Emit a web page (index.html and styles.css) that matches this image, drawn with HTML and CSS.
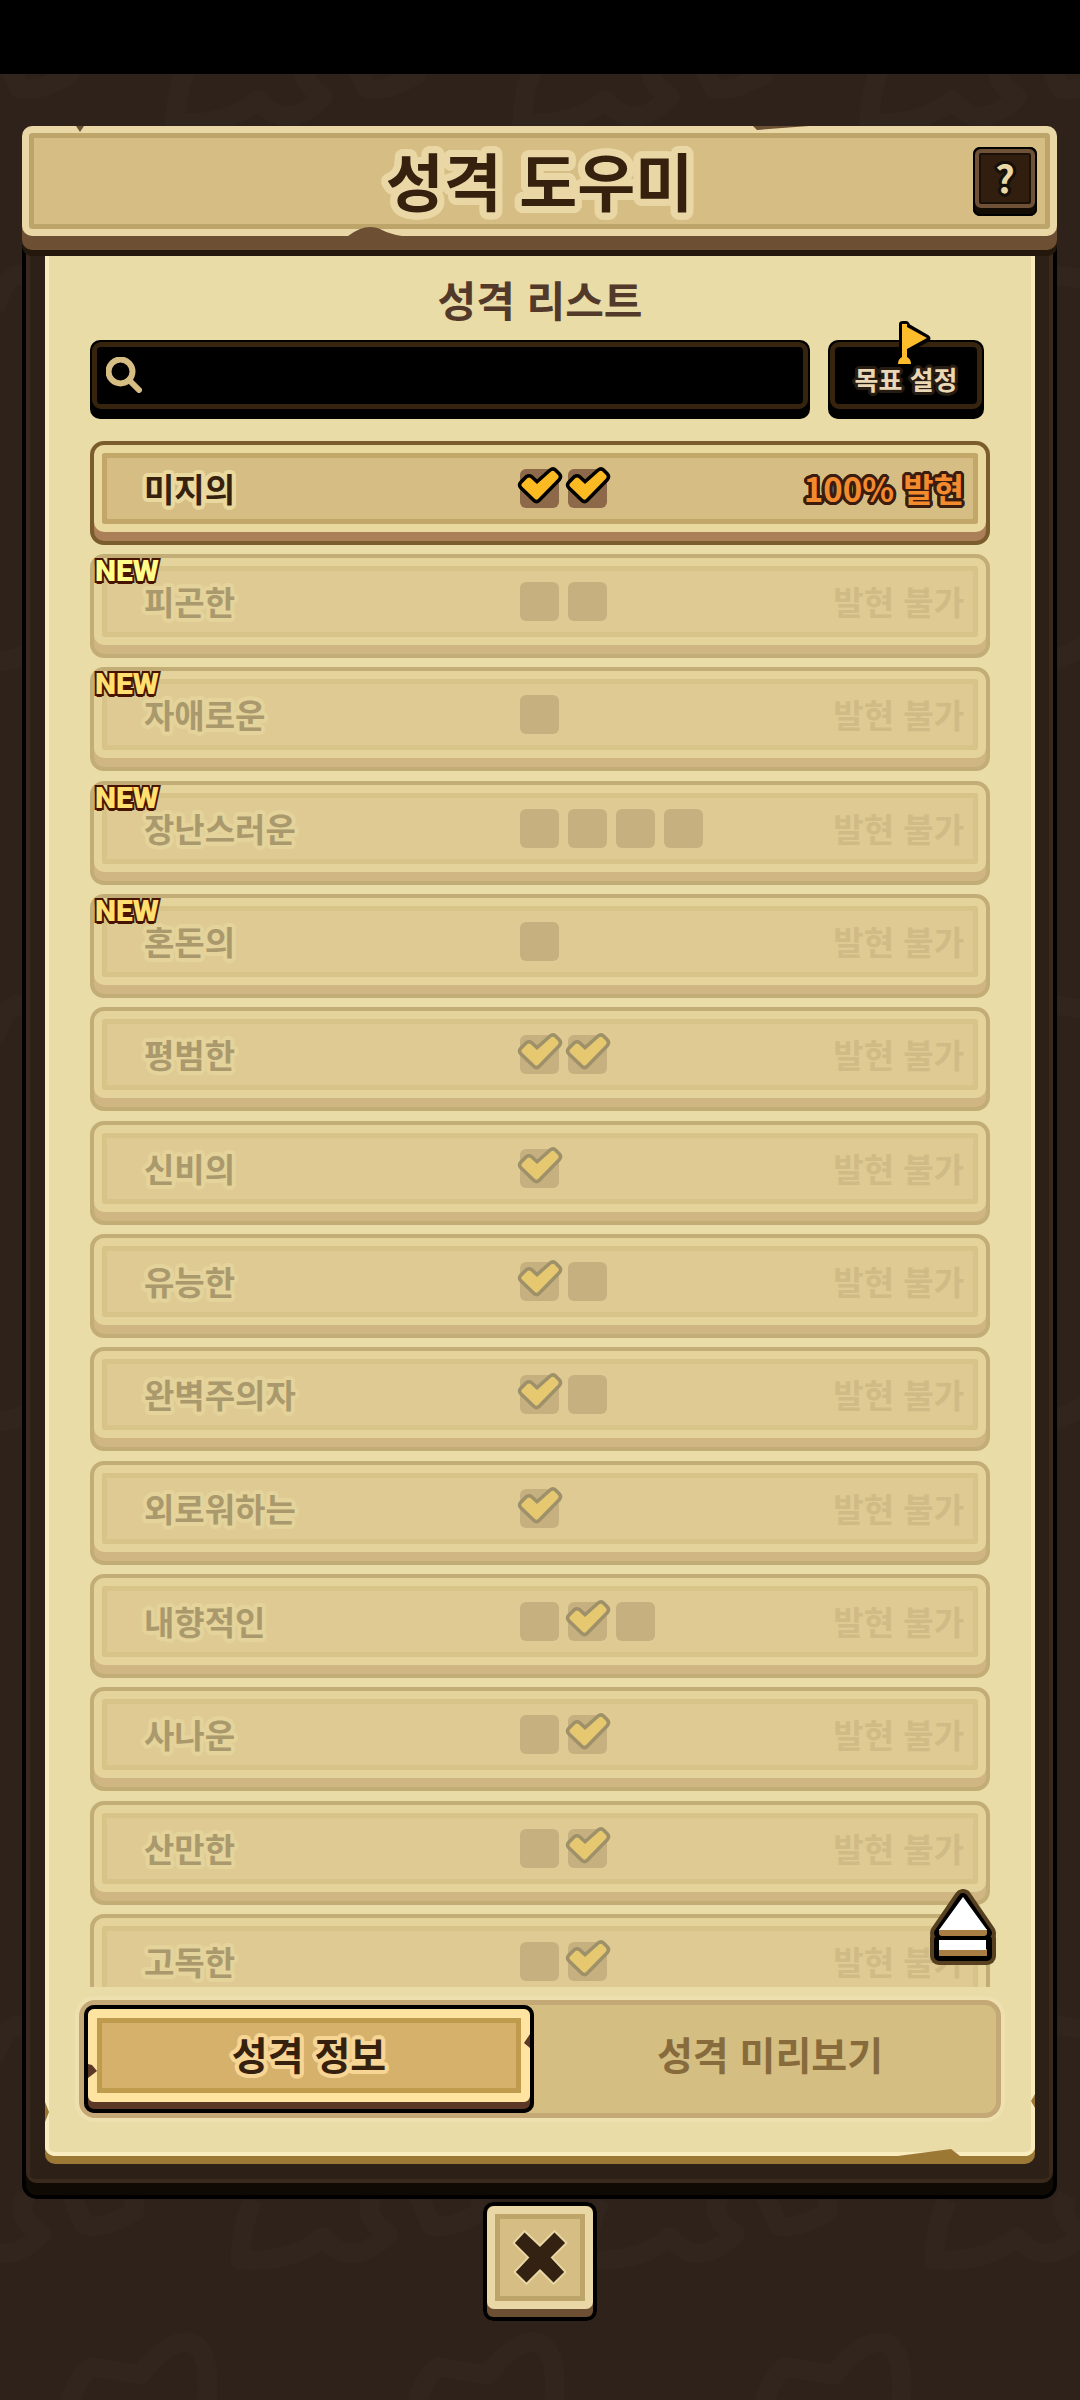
FILE: index.html
```html
<!DOCTYPE html>
<html lang="ko">
<head>
<meta charset="utf-8">
<meta name="viewport" content="width=device-width, initial-scale=1">
<title>성격 도우미</title>
<link rel="stylesheet" href="styles.css">
</head>
<body>
<svg class="backdrop" aria-hidden="true">
  <defs>
    <g id="scrawl">
      <path d="M-70 -37Q-82 -10 -83 23Q-30 26 0 0Q28 34 65 -3L52 -14Q42 -26 50 -42"/>
      <path d="M95 -42L108 -12Q124 -6 158 -25V-42"/>
    </g>
    <path id="hump" d="M70 60Q80 30 92 25Q110 28 140 33Q166 0 187 0Q212 4 207 60"/>
    <pattern id="doodle" width="347" height="2400" patternUnits="userSpaceOnUse">
      <g fill="none" stroke="#32251e" stroke-width="19" stroke-linejoin="round">
        <use href="#scrawl" x="258" y="100"/><use href="#scrawl" x="-89" y="100"/>
        <use href="#hump" x="-76" y="250"/><use href="#hump" x="271" y="250"/>
        <use href="#scrawl" x="50" y="640"/><use href="#hump" x="-76" y="980"/>
        <use href="#scrawl" x="50" y="1400"/><use href="#hump" x="-76" y="2000"/>
        <use href="#scrawl" x="323" y="2237"/><use href="#scrawl" x="-24" y="2237"/>
        <use href="#hump" y="2342"/>
      </g>
    </pattern>
  </defs>
  <rect width="100%" height="100%" fill="url(#doodle)"/>
</svg>

<svg class="defs" aria-hidden="true">
  <symbol id="tick" viewBox="0 0 46 40">
    <path class="tick-edge" d="M5 17.500L10.500 12Q12 11 13.500 12L20 18L34 5.500Q36 4 37.500 5.500L41 9Q42.500 10.500 41 12.500L21 33Q19.500 34.500 18 33L5 20.500Q3.500 19 5 17.500Z"/>
  </symbol>
</svg>

<div class="status-bar"></div>

<main class="dialog">
  <header class="title-bar">
    <svg class="chip chip-a" viewBox="0 0 8 6" aria-hidden="true"><path d="M0 0H8L4 6Z"/></svg>
    <svg class="chip chip-b" viewBox="0 0 56 4" aria-hidden="true"><path d="M0 0H56L4 4Z"/></svg>
    <svg class="chip chip-c" viewBox="0 0 54 9" aria-hidden="true"><path d="M0 9Q12 0 22 0Q29 0 34 3Q42 7 54 9Z"/></svg>
    <h1>성격 도우미</h1>
    <button class="help" type="button" aria-label="도움말"><span class="ring-3">?</span></button>
  </header>

  <div class="frame">
    <section class="panel">
      <svg class="nick nick-left" viewBox="0 0 4 20" aria-hidden="true"><path d="M0 0L4 10L0 20Z"/></svg>
      <svg class="nick nick-right" viewBox="0 0 4 14" aria-hidden="true"><path d="M4 0L0 7L4 14Z"/></svg>
      <svg class="nick nick-bottom" viewBox="0 0 62 7" aria-hidden="true"><path d="M0 7L53 0L62 7Z"/></svg>

      <h2>성격 리스트</h2>

      <div class="tools">
        <label class="search">
          <svg viewBox="0 0 36 36" aria-hidden="true"><circle cx="14.500" cy="14.500" r="12"/><path d="M23 23L33 33"/></svg>
          <input type="text" aria-label="성격 검색">
        </label>
        <button class="goal" type="button">
          <svg viewBox="0 0 34 44" aria-hidden="true"><path class="flag-edge" d="M2 40V4Q2 2 5 2H8Q10 2 11 5L30 16Q33 18 30 21L11 31V40"/><path class="flag" d="M4 4H9V7L29 18L9 29V37Q13 39 13 44H0Q0 39 4 37Z"/></svg>
          <span class="ring-3">목표 설정</span>
        </button>
      </div>

      <div class="list-wrap">
        <ul class="list" id="list"></ul>
        <button class="to-top" type="button" aria-label="맨 위로">
          <svg viewBox="0 0 68 76" aria-hidden="true">
            <g class="halo"><path d="M34 9L58 44H10Z"/><path d="M10 49H58V67H10Z"/></g>
            <g class="ink"><path d="M34 9L58 44H10Z"/><path d="M10 51H58V67H10Z"/></g>
            <path class="wood" d="M10 40H58V44Q58 47 55 47H13Q10 47 10 44ZM10 60H58V67H10Z"/>
            <path class="face" d="M34 8L58 41H10ZM10 51H57V61H10Z"/>
          </svg>
        </button>
      </div>

      <nav class="tabs">
        <button class="tab tab-on" type="button">
          <svg class="tab-nick tab-nick-l" viewBox="0 0 9 14" aria-hidden="true"><path d="M0 0L4 1L9 7L4 11L0 14Z"/></svg>
          <svg class="tab-nick tab-nick-r" viewBox="0 0 6 14" aria-hidden="true"><path d="M6 0L0 9L6 14Z"/></svg>
          <span class="ring-4">성격 정보</span>
        </button>
        <button class="tab" type="button"><span>성격 미리보기</span></button>
      </nav>
    </section>
  </div>

  <button class="close" type="button" aria-label="닫기">
    <svg viewBox="0 0 58 58" aria-hidden="true"><path d="M13 3L29 18L44 3L55 14L40 29L54 44L43 55L29 41L15 55L4 44L18 29L3 14Z"/></svg>
  </button>
</main>
<script src="list.js"></script>
</body>
</html>
```
FILE: list.js
```js
// Slots: 1 = achieved, 0 = still empty.
const traits = [
  { name: "미지의", slots: [1, 1], open: true },
  { name: "피곤한", slots: [0, 0], fresh: "bright" },
  { name: "자애로운", slots: [0], fresh: "warm" },
  { name: "장난스러운", slots: [0, 0, 0, 0], fresh: "warm" },
  { name: "혼돈의", slots: [0], fresh: "warm" },
  { name: "평범한", slots: [1, 1] },
  { name: "신비의", slots: [1] },
  { name: "유능한", slots: [1, 0] },
  { name: "완벽주의자", slots: [1, 0] },
  { name: "외로워하는", slots: [1] },
  { name: "내향적인", slots: [0, 1, 0] },
  { name: "사나운", slots: [0, 1] },
  { name: "산만한", slots: [0, 1] },
  { name: "고독한", slots: [0, 1] }
];

const tick = '<svg viewBox="0 0 46 40" aria-hidden="true"><use href="#tick"/></svg>';

document.getElementById("list").innerHTML = traits.map(t => `
  <li class="row ${t.open ? "row-open" : ""}">
    <div class="plate">
      <span class="name ring-4">${t.name}</span>
      <span class="slots">${t.slots.map(s => `<i class="slot">${s ? tick : ""}</i>`).join("")}</span>
      <span class="state ${t.open ? "ring-3" : ""}">${t.open ? "100% 발현" : "발현 불가"}</span>
    </div>
    ${t.fresh ? `<b class="new new-${t.fresh}">NEW</b>` : ""}
  </li>`).join("");
```
FILE: styles.css
```css
* { box-sizing: border-box; }

body {
  margin: 0;
  min-height: 100vh;
  position: relative;
  background: #2e221b;
  font-family: "Noto Sans CJK KR", "Noto Sans", sans-serif;
  font-weight: 700;
  color: #36210f;
}

button {
  margin: 0;
  padding: 0;
  border: 0;
  font: inherit;
  color: inherit;
  cursor: pointer;
}

h1, h2, ul { margin: 0; padding: 0; }
svg { display: block; }
.defs { position: absolute; width: 0; height: 0; }
.backdrop { position: absolute; inset: 0; width: 100%; height: 100%; }

/* Rounded outlines round lettering, coloured by --ring */
.ring-3 {
  text-shadow:
    3px 0 var(--ring), 3px 1px var(--ring), 2px 2px var(--ring), 1px 3px var(--ring),
    0 3px var(--ring), -1px 3px var(--ring), -2px 2px var(--ring), -3px 1px var(--ring),
    -3px 0 var(--ring), -3px -1px var(--ring), -2px -2px var(--ring), -1px -3px var(--ring),
    0 -3px var(--ring), 1px -3px var(--ring), 2px -2px var(--ring), 3px -1px var(--ring);
}
.ring-4 {
  text-shadow:
    4px 0 var(--ring), 4px 1px var(--ring), 3px 3px var(--ring), 1px 4px var(--ring),
    0 4px var(--ring), -1px 4px var(--ring), -3px 3px var(--ring), -4px 1px var(--ring),
    -4px 0 var(--ring), -4px -1px var(--ring), -3px -3px var(--ring), -1px -4px var(--ring),
    0 -4px var(--ring), 1px -4px var(--ring), 3px -3px var(--ring), 4px -1px var(--ring);
}

.status-bar { position: relative; height: 74px; background: #000; }

.dialog {
  position: relative;
  display: flex;
  flex-direction: column;
  margin: 52px 23px 0 22px;
}

/* Title plank */
.title-bar {
  position: relative;
  z-index: 1;
  display: flex;
  align-items: center;
  justify-content: center;
  height: 110px;
  padding-bottom: 4px;
  border: 7px solid #ead7a6;
  border-radius: 10px;
  background: #d6bd83;
  box-shadow: inset 0 0 0 5px #bda56a, 0 14px 0 #6d4f33, 0 20px 0 #24180d;
}
h1 {
  --ring: #ead7a6;
  font-size: 63px;
  line-height: 92px;
  text-shadow:
    7px 0 var(--ring), 7px 2px var(--ring), 6px 4px var(--ring), 5px 5px var(--ring), 4px 6px var(--ring), 2px 7px var(--ring),
    0 7px var(--ring), -2px 7px var(--ring), -4px 6px var(--ring), -5px 5px var(--ring), -6px 4px var(--ring), -7px 2px var(--ring),
    -7px 0 var(--ring), -7px -2px var(--ring), -6px -4px var(--ring), -5px -5px var(--ring), -4px -6px var(--ring), -2px -7px var(--ring),
    0 -7px var(--ring), 2px -7px var(--ring), 4px -6px var(--ring), 5px -5px var(--ring), 6px -4px var(--ring), 7px -2px var(--ring),
    3px 0 var(--ring), -3px 0 var(--ring), 0 3px var(--ring), 0 -3px var(--ring);
}
.chip { position: absolute; fill: #6d4f33; }
.chip-a { left: 47px; top: -7px; width: 8px; height: 6px; }
.chip-b { right: 241px; top: -7px; width: 56px; height: 4px; }
.chip-c { left: 319px; bottom: -7px; width: 54px; height: 9px; }

.help {
  position: absolute;
  right: 13px;
  top: 14px;
  width: 64px;
  height: 69px;
  padding: 2px 2px 8px;
  border-radius: 7px;
  background: #120c05;
  box-shadow: inset 0 0 0 2px #000;
}
.help span {
  --ring: #15110a;
  display: flex;
  align-items: center;
  justify-content: center;
  height: 100%;
  padding-bottom: 4px;
  border: 4px solid #6e5136;
  border-radius: 6px;
  background: #311e0f;
  box-shadow: inset 0 0 0 2px #1b1008;
  font-size: 38px;
  line-height: 40px;
  color: #ead7a6;
}

/* Dark frame with the parchment inside */
.frame {
  padding: 20px 18px 39px 19px;
  border: 4px solid #000;
  border-top: 0;
  border-radius: 0 0 15px 15px;
  background: #2d2017;
  box-shadow: inset 0 -12px 0 #100a04, inset 0 -16px 0 #3a291d, inset 4px 0 0 #3a291d, inset -4px 0 0 #3a291d;
}
.panel {
  position: relative;
  display: flex;
  flex-direction: column;
  padding: 0 45px 38px;
  border-radius: 0 0 10px 10px;
  background: #e9dca7;
  box-shadow: inset 4px 0 0 #f9ecbf, inset -4px 0 0 #f9ecbf, inset 0 -4px 0 #f9ecbf, 0 8px 0 #9c7835;
}
.nick { position: absolute; fill: #9c7835; }
.nick-left { left: 0; bottom: 34px; width: 4px; height: 20px; }
.nick-right { right: 0; bottom: 48px; width: 4px; height: 14px; }
.nick-bottom { right: 75px; bottom: 0; width: 62px; height: 7px; }

h2 {
  padding-top: 12px;
  font-size: 42px;
  line-height: 62px;
  text-align: center;
  color: #53392a;
}

.tools {
  display: flex;
  gap: 18px;
  margin: 10px 6px 0 0;
}
.search, .goal {
  height: 79px;
  padding: 2px 2px 10px;
  border-radius: 10px;
  background: #000;
}
.search { flex: 1; position: relative; }
.search svg {
  position: absolute;
  left: 16px;
  top: 17px;
  width: 36px;
  height: 36px;
  fill: none;
  stroke: #d6bd83;
  stroke-width: 6;
  stroke-linecap: round;
}
.search input {
  width: 100%;
  height: 100%;
  padding: 0 16px 0 56px;
  border: 5px solid #36240f;
  border-radius: 9px;
  outline: 0;
  background: transparent;
  font: inherit;
  font-size: 32px;
  color: #ead7a6;
}
.goal { position: relative; width: 156px; }
.goal span {
  --ring: #261c12;
  display: flex;
  align-items: center;
  justify-content: center;
  height: 100%;
  padding-top: 6px;
  border: 5px solid #36240f;
  border-radius: 9px;
  font-size: 26px;
  line-height: 40px;
  color: #ead7b6;
}
.goal svg {
  position: absolute;
  left: 70px;
  top: -20px;
  width: 34px;
  height: 44px;
}
.flag-edge { fill: #000; stroke: #000; stroke-width: 2; }
.flag { fill: #fcbc2c; }

/* Trait list */
.list-wrap { position: relative; padding-top: 22px; }
.list {
  display: flex;
  flex-direction: column;
  gap: 9px;
  height: 1546px;
  overflow: hidden;
  list-style: none;
}
.row {
  --edge: #c2ad76;
  --rim: #e4d39a;
  --line: #d8c389;
  --fill: #deca92;
  --base: #cfb682;
  --slot: #c7b07f;
  --ink: #aa996c;
  --tick: #e6c871;
  --tick-edge: #9e916a;
  position: relative;
  flex: none;
  height: 104px;
  padding-bottom: 9px;
  border: 4px solid var(--edge);
  border-radius: 14px;
  background: var(--base);
}
.row:nth-child(3n + 4) { margin-top: 1px; }
.row-open {
  --edge: #7a5c2d;
  --rim: #ead99e;
  --line: #c3a769;
  --fill: #d6bd83;
  --base: #ab7f58;
  --slot: #8d694a;
  --ink: #36210f;
  --tick: #fbb922;
  --tick-edge: #000;
}
.plate {
  display: grid;
  grid-template-columns: 366px 1fr auto;
  align-items: center;
  height: 87px;
  padding: 0 14px 0 42px;
  border: 8px solid var(--rim);
  border-radius: 10px;
  background: var(--fill);
  box-shadow: inset 0 0 0 5px var(--line);
}
.name, .state {
  padding-bottom: 2px;
  font-size: 33px;
  line-height: 48px;
  white-space: nowrap;
}
.name {
  --ring: var(--rim);
  color: var(--ink);
}
.slots { display: flex; gap: 9px; padding-left: 10px; }
.slot {
  position: relative;
  width: 39px;
  height: 39px;
  border-radius: 6px;
  background: var(--slot);
}
.slot svg {
  position: absolute;
  left: -3px;
  top: -3px;
  width: 46px;
  height: 40px;
  overflow: visible;
}
.tick-edge {
  fill: var(--tick);
  stroke: var(--tick-edge);
  stroke-width: 7;
  stroke-linejoin: round;
  paint-order: stroke;
}
.state { color: #d0bb86; }
.row-open .state {
  --ring: #3b1d10;
  color: #f48a2e;
}

.new {
  position: absolute;
  left: 1px;
  top: -3px;
  font-family: Roboto, sans-serif;
  font-size: 30px;
  font-weight: 900;
  line-height: 32px;
  color: #ffe070;
  -webkit-text-stroke: 4px #481400;
  paint-order: stroke fill;
  text-shadow: 0 3px 0 #481400;
}
.new-bright { color: #ffff8c; }

.to-top {
  position: absolute;
  right: -7px;
  bottom: 22px;
  width: 68px;
  height: 76px;
  background: none;
}
.to-top svg { width: 68px; height: 76px; }
.halo path { fill: #57401f; stroke: #57401f; stroke-width: 18; stroke-linejoin: round; }
.ink path { fill: #000; stroke: #000; stroke-width: 10; stroke-linejoin: round; }
.wood { fill: #a97e45; }
.face { fill: #fff; }

/* Bottom tabs */
.tabs {
  display: flex;
  height: 118px;
  margin: 13px -11px 0;
  border: 5px solid #c4a875;
  border-radius: 16px;
  background: #d4be82;
  box-shadow: 0 0 0 4px #efe1af;
}
.tab {
  flex: 1;
  position: relative;
  padding: 0 0 12px 10px;
  background: none;
  font-size: 39px;
  line-height: 60px;
  color: #876b3c;
}
.tab-on {
  flex: none;
  width: 450px;
  padding: 4px 4px 11px;
  border-radius: 10px;
  background: #5a3825;
  box-shadow: inset 0 0 0 4px #000;
  color: #36210f;
}
.tab-on span {
  --ring: #f6d595;
  display: flex;
  align-items: center;
  justify-content: center;
  height: 100%;
  padding-bottom: 6px;
  border: 9px solid #ffe4a1;
  border-radius: 6px;
  background: #d5b16c;
  box-shadow: inset 0 0 0 5px #bf9c4d;
}
.tab-nick { position: absolute; fill: #5a3825; }
.tab-nick-l { left: 4px; top: 59px; width: 9px; height: 14px; }
.tab-nick-r { right: 4px; top: 29px; width: 6px; height: 14px; }

.close {
  align-self: center;
  width: 114px;
  height: 119px;
  margin: 3px 0 60px;
  padding: 4px 4px 12px;
  border-radius: 10px;
  background: #6d4f33;
  box-shadow: inset 0 0 0 4px #000;
}
.close svg {
  width: 106px;
  height: 103px;
  padding: 14px 17px;
  border: 8px solid #ead7a6;
  border-radius: 7px;
  background: #d6bd83;
  box-shadow: inset 0 0 0 5px #bda56a;
  fill: #332112;
  stroke: #ead7a6;
  stroke-width: 4;
  paint-order: stroke;
}
```
